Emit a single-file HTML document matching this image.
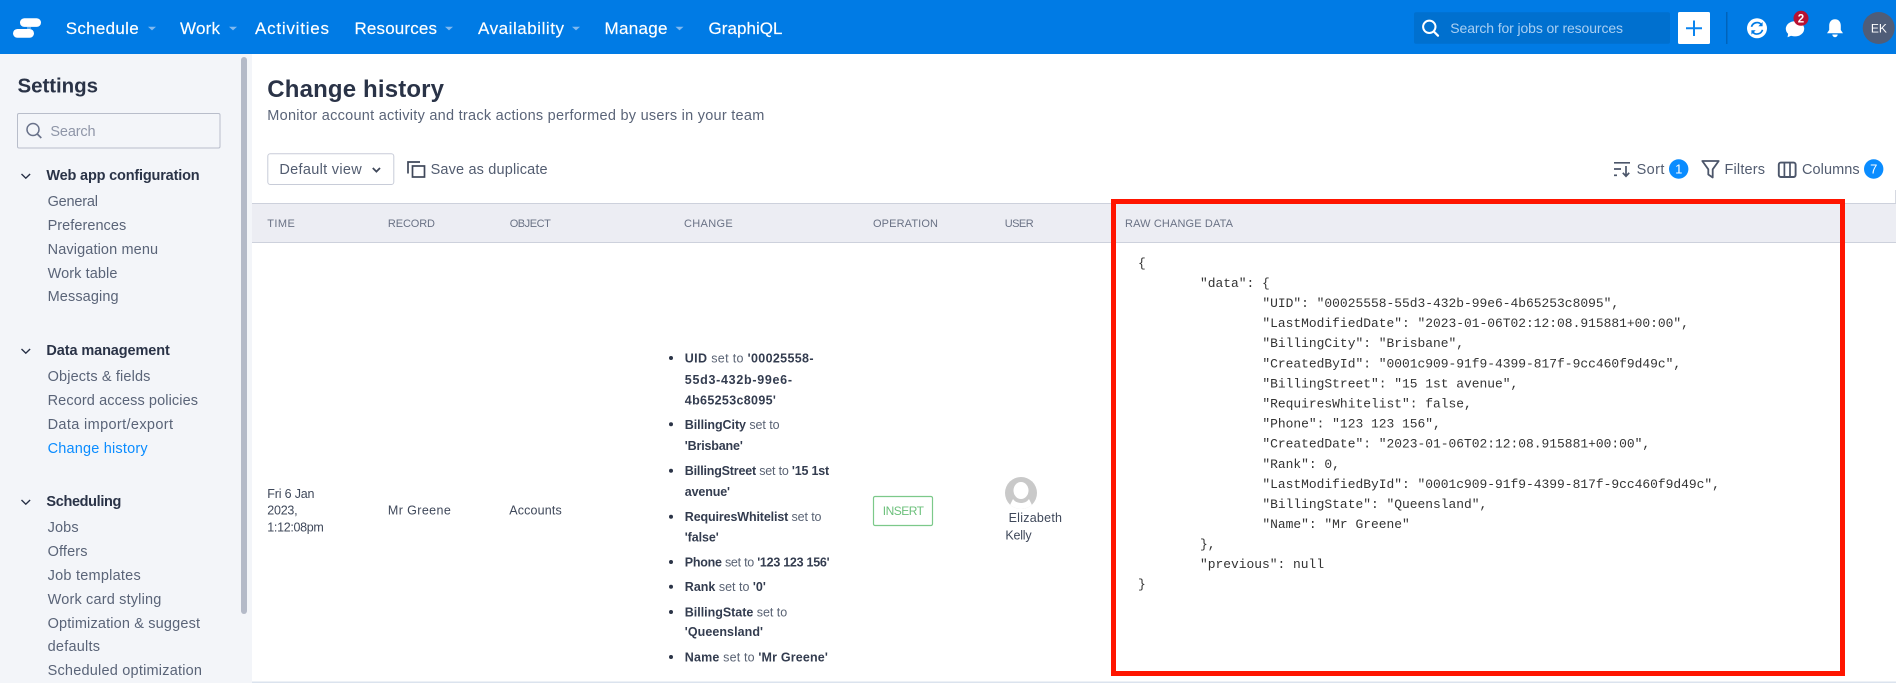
<!DOCTYPE html>
<html lang="en">
<head>
<meta charset="utf-8">
<title>Change history</title>
<style>
html,body{margin:0;padding:0;background:#fff;width:1896px;height:683px;overflow:hidden}
svg{display:block}
text{font-family:"Liberation Sans",sans-serif;white-space:pre}
.nav{font-size:17px;fill:#fff;stroke:#fff;stroke-width:.15px}
.side{font-size:14.5px;fill:#5a6478}
.sec{font-size:14.5px;font-weight:700;fill:#2a3347}
.tool{font-size:14.5px;fill:#525c70}
.th{font-size:11px;fill:#6a7285}
.td{font-size:12.5px;fill:#3f485a}
.li{font-size:12.5px;fill:#5a6374}
.li tspan.b{font-weight:700;fill:#333c4f}
.json{font-family:"Liberation Mono",monospace;font-size:12.93px;fill:#333}
</style>
</head>
<body>
<svg xmlns="http://www.w3.org/2000/svg" width="1896" height="683" viewBox="0 0 1896 683">
<rect width="1896" height="683" fill="#fff"/>

<!-- top bar -->
<rect width="1896" height="54" fill="#007be5"/>
<rect x="20" y="18.3" width="21" height="8.6" rx="4.3" fill="#fff"/>
<rect x="13" y="29" width="21" height="8.8" rx="4.4" fill="#fff"/>
<path d="M27 26.9h4v2.1h-4z" fill="#fff" opacity=".35"/>

<text class="nav" x="65.7" y="34" textLength="73">Schedule</text>
<path d="M148 26.8h8l-4 3.6z" fill="#80b9ef"/>
<text class="nav" x="180" y="34" textLength="40">Work</text>
<path d="M229 26.8h8l-4 3.6z" fill="#80b9ef"/>
<text class="nav" x="255" y="34" textLength="74">Activities</text>
<text class="nav" x="354.5" y="34" textLength="82.5">Resources</text>
<path d="M445 26.8h8l-4 3.6z" fill="#80b9ef"/>
<text class="nav" x="478" y="34" textLength="86">Availability</text>
<path d="M572 26.8h8l-4 3.6z" fill="#80b9ef"/>
<text class="nav" x="604.5" y="34" textLength="63">Manage</text>
<path d="M675.5 26.8h8l-4 3.6z" fill="#80b9ef"/>
<text class="nav" x="708.5" y="34" textLength="74">GraphiQL</text>

<rect x="1414" y="12.3" width="256" height="31.4" rx="2" fill="#0070cf"/>
<circle cx="1429.3" cy="26.8" r="6.2" fill="none" stroke="#fff" stroke-width="2"/>
<path d="M1433.8 31.5l4.2 4.2" stroke="#fff" stroke-width="2.2" stroke-linecap="round"/>
<text x="1450.3" y="33" font-size="14" fill="#a9cff2" textLength="172.7">Search for jobs or resources</text>

<rect x="1678" y="12" width="32" height="32" rx="1.5" fill="#fff"/>
<path d="M1694 20.5v15.500M1686 28.3h16" stroke="#0a84ef" stroke-width="2"/>
<rect x="1726" y="12" width="1.5" height="32" fill="#0063ba"/>

<!-- sync -->
<circle cx="1757" cy="28.3" r="10" fill="#fff"/>
<path d="M1751.5 26.800a5.800 5.800 0 0 1 9.800-2.400" fill="none" stroke="#007be5" stroke-width="1.700"/>
<path d="M1762.6 22v4.300h-4.300z" fill="#007be5"/>
<path d="M1762.5 29.800a5.800 5.800 0 0 1-9.800 2.400" fill="none" stroke="#007be5" stroke-width="1.700"/>
<path d="M1751.4 34.600v-4.300h4.300z" fill="#007be5"/>

<!-- chat -->
<ellipse cx="1795" cy="28.8" rx="9.2" ry="7.6" fill="#fff"/>
<path d="M1788.5 32l-1 5.300 6-2.600z" fill="#fff"/>
<circle cx="1801" cy="18.3" r="7.5" fill="#b81232"/>
<text x="1801" y="22.4" font-size="11.5" font-weight="700" fill="#fff" text-anchor="middle">2</text>

<!-- bell -->
<path d="M1835 19.2c-3.900 0-5.800 3-5.800 6.500v4.300l-2.200 3.200h16l-2.200-3.200v-4.300c0-3.500-1.900-6.500-5.800-6.500z" fill="#fff"/>
<path d="M1832.3 34.500h5.400a2.700 2.700 0 0 1-5.400 0z" fill="#fff"/>

<circle cx="1878.7" cy="28" r="16" fill="#4f5d78"/>
<text x="1870.9" y="32.6" font-size="12" fill="#fff" textLength="16">EK</text>

<!-- sidebar -->
<rect x="0" y="54" width="252" height="629" fill="#f3f5f9"/>
<rect x="241" y="57" width="6" height="557" rx="3" fill="#b4bac8"/>
<text x="17.5" y="92.5" font-size="20.5" font-weight="700" fill="#2a3347" textLength="80.5">Settings</text>
<rect x="17.5" y="113.5" width="202.5" height="34.5" rx="1.5" fill="#f3f5f9" stroke="#b8bdca" stroke-width="1"/>
<circle cx="33" cy="129.500" r="6" fill="none" stroke="#69728a" stroke-width="1.500"/>
<path d="M37.300 134l4 4" stroke="#69728a" stroke-width="1.600"/>
<text x="50.4" y="136" font-size="14.5" fill="#8f96a8" textLength="45.2">Search</text>

<path d="M21.5 174l4.300 4.200 4.300-4.200" fill="none" stroke="#262f45" stroke-width="1.400"/>
<text class="sec" x="46.4" y="180" textLength="153.2">Web app configuration</text>
<text class="side" x="47.6" y="206" textLength="50.4">General</text>
<text class="side" x="47.6" y="230" textLength="78.6">Preferences</text>
<text class="side" x="47.6" y="254" textLength="110.5">Navigation menu</text>
<text class="side" x="47.6" y="278" textLength="69.8">Work table</text>
<text class="side" x="47.6" y="301" textLength="71">Messaging</text>

<path d="M21.5 349l4.300 4.200 4.300-4.200" fill="none" stroke="#262f45" stroke-width="1.400"/>
<text class="sec" x="46.4" y="355" textLength="123.4">Data management</text>
<text class="side" x="47.6" y="381" textLength="102.8">Objects &amp; fields</text>
<text class="side" x="47.6" y="405" textLength="150.4">Record access policies</text>
<text class="side" x="47.6" y="429" textLength="125.4">Data import/export</text>
<text class="side" x="47.6" y="453" textLength="100" style="fill:#0a8cff">Change history</text>

<path d="M21.5 500l4.300 4.200 4.300-4.200" fill="none" stroke="#262f45" stroke-width="1.400"/>
<text class="sec" x="46.4" y="506" textLength="75">Scheduling</text>
<text class="side" x="47.6" y="532" textLength="31">Jobs</text>
<text class="side" x="47.6" y="556" textLength="39.9">Offers</text>
<text class="side" x="47.6" y="580" textLength="93.1">Job templates</text>
<text class="side" x="47.6" y="604" textLength="113.7">Work card styling</text>
<text class="side" x="47.6" y="628" textLength="152.4">Optimization &amp; suggest</text>
<text class="side" x="47.6" y="651" textLength="52.4">defaults</text>
<text class="side" x="47.6" y="675" textLength="154.4">Scheduled optimization</text>

<!-- page head -->
<text x="267.3" y="97" font-size="24" font-weight="700" fill="#2a3347" textLength="176.7">Change history</text>
<text x="267.3" y="120" font-size="14.5" fill="#5a6478" textLength="497">Monitor account activity and track actions performed by users in your team</text>

<rect x="267.8" y="153.8" width="126" height="30.7" rx="2.5" fill="#fff" stroke="#c8ccd8" stroke-width="1"/>
<text class="tool" x="279.4" y="174" textLength="82.3">Default view</text>
<path d="M372.8 168l3.600 3.600 3.600-3.600" fill="none" stroke="#3f485a" stroke-width="1.800"/>
<path d="M408 173.500V162h12" fill="none" stroke="#3f485a" stroke-width="1.700"/>
<rect x="412.5" y="166" width="12" height="11" fill="none" stroke="#3f485a" stroke-width="1.700"/>
<text class="tool" x="430.6" y="174" textLength="117">Save as duplicate</text>

<!-- sort / filters / columns -->
<path d="M1614 162.800h16M1614 169h7" stroke="#4c566a" stroke-width="1.700" fill="none"/>
<path d="M1614 175.300h3" stroke="#4c566a" stroke-width="1.700" fill="none"/>
<path d="M1626 166v10M1622.800 172.800l3.200 3.400 3.200-3.400" stroke="#4c566a" stroke-width="1.700" fill="none"/>
<text class="tool" x="1636.6" y="174" textLength="27.8">Sort</text>
<circle cx="1678.7" cy="169" r="9.7" fill="#0a8cff"/>
<text x="1678.7" y="173.7" font-size="13" fill="#fff" text-anchor="middle">1</text>

<path d="M1702.300 161h16.400l-6 8.300v8.200l-4.400-3v-5.200z" fill="none" stroke="#4c566a" stroke-width="1.800" stroke-linejoin="round"/>
<text class="tool" x="1724.5" y="174" textLength="40.5">Filters</text>

<rect x="1778.8" y="162.600" width="16.8" height="14.4" rx="2" fill="none" stroke="#4c566a" stroke-width="1.900"/>
<path d="M1784.400 162.600v14.400M1790 162.600v14.400" stroke="#4c566a" stroke-width="1.700"/>
<text class="tool" x="1802" y="174" textLength="57.6">Columns</text>
<circle cx="1873.7" cy="169" r="9.7" fill="#0a8cff"/>
<text x="1873.7" y="173.7" font-size="13" fill="#fff" text-anchor="middle">7</text>

<!-- table header -->
<rect x="1895" y="190" width="1" height="14" fill="#d6d9e1"/>
<rect x="252" y="203.5" width="1644" height="39" fill="#ecedf3"/>
<rect x="252" y="203" width="1644" height="1" fill="#cdd1dc"/>
<rect x="252" y="242" width="1644" height="1" fill="#cdd1dc"/>
<text class="th" x="267.3" y="227" textLength="27.5">TIME</text>
<text class="th" x="387.9" y="227" textLength="47.1">RECORD</text>
<text class="th" x="509.7" y="227" textLength="41.1">OBJECT</text>
<text class="th" x="684" y="227" textLength="48.7">CHANGE</text>
<text class="th" x="873" y="227" textLength="65">OPERATION</text>
<text class="th" x="1004.7" y="227" textLength="29">USER</text>
<text class="th" x="1125" y="227" textLength="108">RAW CHANGE DATA</text>

<!-- row -->
<rect x="252" y="681.5" width="1644" height="1.5" fill="#dbe3ee"/>
<text class="td" x="267.3" y="498" textLength="47.2">Fri 6 Jan</text>
<text class="td" x="267.3" y="514.5" textLength="30.3">2023,</text>
<text class="td" x="267.3" y="531.5" textLength="56.5">1:12:08pm</text>
<text class="td" x="387.9" y="514.5" textLength="62.9">Mr Greene</text>
<text class="td" x="509.3" y="514.5" textLength="52.4">Accounts</text>

<g fill="#2b3447">
<circle cx="671" cy="358" r="2"/><circle cx="671" cy="424.3" r="2"/><circle cx="671" cy="470.7" r="2"/><circle cx="671" cy="516.7" r="2"/><circle cx="671" cy="562" r="2"/><circle cx="671" cy="586.7" r="2"/><circle cx="671" cy="612" r="2"/><circle cx="671" cy="657" r="2"/>
</g>
<text class="li" x="684.8" y="362.5" textLength="128.7"><tspan class="b">UID</tspan> set to <tspan class="b">'00025558-</tspan></text>
<text class="li" x="684.8" y="383.8" textLength="107.2"><tspan class="b">55d3-432b-99e6-</tspan></text>
<text class="li" x="684.8" y="404.5" textLength="91.1"><tspan class="b">4b65253c8095'</tspan></text>
<text class="li" x="684.8" y="428.8" textLength="94.8"><tspan class="b">BillingCity</tspan> set to</text>
<text class="li" x="684.8" y="449.8" textLength="58"><tspan class="b">'Brisbane'</tspan></text>
<text class="li" x="684.8" y="475.2" textLength="144.4"><tspan class="b">BillingStreet</tspan> set to <tspan class="b">'15 1st</tspan></text>
<text class="li" x="684.8" y="496.2" textLength="45.2"><tspan class="b">avenue'</tspan></text>
<text class="li" x="684.8" y="521.2" textLength="136.7"><tspan class="b">RequiresWhitelist</tspan> set to</text>
<text class="li" x="684.8" y="541.5" textLength="33.9"><tspan class="b">'false'</tspan></text>
<text class="li" x="684.8" y="566.5" textLength="144.8"><tspan class="b">Phone</tspan> set to <tspan class="b">'123 123 156'</tspan></text>
<text class="li" x="684.8" y="591.2" textLength="81"><tspan class="b">Rank</tspan> set to <tspan class="b">'0'</tspan></text>
<text class="li" x="684.8" y="616.5" textLength="102.4"><tspan class="b">BillingState</tspan> set to</text>
<text class="li" x="684.8" y="636.2" textLength="78.2"><tspan class="b">'Queensland'</tspan></text>
<text class="li" x="684.8" y="661.5" textLength="143.1"><tspan class="b">Name</tspan> set to <tspan class="b">'Mr Greene'</tspan></text>

<rect x="873.5" y="496.5" width="59" height="29" rx="1.5" fill="#fff" stroke="#7cc98a" stroke-width="1.2"/>
<text x="882.8" y="515" font-size="12" fill="#6cc07b" textLength="41.2">INSERT</text>

<clipPath id="av"><circle cx="1021" cy="493" r="16"/></clipPath>
<circle cx="1021" cy="493" r="16" fill="#c9c9c9"/>
<g clip-path="url(#av)" fill="#fff">
<ellipse cx="1021" cy="490.500" rx="7.500" ry="8.500"/>
<path d="M1013 499c2 3 5 4 8 4s6-1 8-4l6 12h-28z"/>
</g>
<text class="td" x="1008.6" y="522" textLength="53.4">Elizabeth</text>
<text class="td" x="1005.4" y="539.5" textLength="26.2">Kelly</text>

<!-- JSON -->
<text class="json" x="1138" y="267">{</text>
<text class="json" x="1200" y="287">"data": {</text>
<text class="json" x="1262.4" y="307">"UID": "00025558-55d3-432b-99e6-4b65253c8095",</text>
<text class="json" x="1262.4" y="327.1">"LastModifiedDate": "2023-01-06T02:12:08.915881+00:00",</text>
<text class="json" x="1262.4" y="347.2">"BillingCity": "Brisbane",</text>
<text class="json" x="1262.4" y="367.3">"CreatedById": "0001c909-91f9-4399-817f-9cc460f9d49c",</text>
<text class="json" x="1262.4" y="387.4">"BillingStreet": "15 1st avenue",</text>
<text class="json" x="1262.4" y="407.5">"RequiresWhitelist": false,</text>
<text class="json" x="1262.4" y="427.6">"Phone": "123 123 156",</text>
<text class="json" x="1262.4" y="447.7">"CreatedDate": "2023-01-06T02:12:08.915881+00:00",</text>
<text class="json" x="1262.4" y="467.8">"Rank": 0,</text>
<text class="json" x="1262.4" y="487.9">"LastModifiedById": "0001c909-91f9-4399-817f-9cc460f9d49c",</text>
<text class="json" x="1262.4" y="508">"BillingState": "Queensland",</text>
<text class="json" x="1262.4" y="528.1">"Name": "Mr Greene"</text>
<text class="json" x="1200" y="548">},</text>
<text class="json" x="1200" y="568">"previous": null</text>
<text class="json" x="1138" y="588">}</text>

<!-- red annotation -->
<rect x="1113.5" y="201.5" width="729" height="472" fill="none" stroke="#ff1500" stroke-width="5"/>
</svg>
</body>
</html>
